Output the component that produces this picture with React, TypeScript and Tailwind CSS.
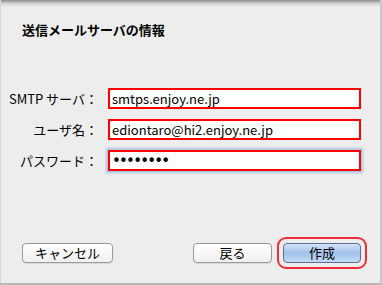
import React from "react";

const font = { fontFamily: '"Lucida Grande", "Noto Sans CJK JP", "Noto Sans", sans-serif' };

const fields = [
  { label: "SMTP サーバ：", value: "smtps.enjoy.ne.jp" },
  { label: "ユーザ名：", value: "ediontaro@hi2.enjoy.ne.jp" },
  { label: "パスワード：", value: "••••••••", focus: true },
];

const MacButton = ({ children, className = "" }: { children: React.ReactNode; className?: string }) => (
  <div
    className={
      "h-[20px] rounded-[4px] border border-[#9a9a9a] bg-gradient-to-b from-white to-[#f0f0f0] flex items-center justify-center text-[13px] text-black shadow-[0_1px_0_rgba(0,0,0,0.08)] " +
      className
    }
  >
    {children}
  </div>
);

export default function App() {
  return (
    <div
      className="relative w-[382px] h-[285px] bg-[#ededed] overflow-hidden border-r-2 border-r-[#c8c8c8] border-b-2 border-b-[#b8b8b8]"
      style={font}
    >
      {/* top shadow */}
      <div className="absolute inset-x-0 top-0 h-[7px] bg-gradient-to-b from-[#8c8c8c] via-[#d2d2d2] to-[#ededed]" />
      <div className="absolute left-0 top-0 bottom-0 w-[1px] bg-[#d8d8d8]" />

      <div className="flex flex-col pt-[20px]">
        <h1 className="pl-[22px] text-[13px] font-bold text-black leading-[20px]">送信メールサーバの情報</h1>

        <div className="mt-[48px] flex flex-col gap-[10px]">
          {fields.map((f) => (
            <div key={f.label} className="flex items-center">
              <div className="w-[99px] text-right text-[13px] text-black leading-[16px] pr-[1px]">{f.label}</div>
              <div
                className={
                  "ml-[9px] w-[253px] h-[21px] bg-white border-2 border-[#ff0000] flex items-center pl-[2px] text-[13px] text-black leading-[16px] " +
                  (f.focus ? "shadow-[0_0_2px_2px_rgba(120,160,220,0.55)]" : "")
                }
              >
                {f.focus ? (
                  <span className="text-[15px] tracking-[-1.8px] font-['DejaVu_Sans'] leading-[16px]">{f.value}</span>
                ) : (
                  f.value
                )}
              </div>
            </div>
          ))}
        </div>

        <div className="mt-[66px] flex items-center pl-[22px]">
          <MacButton className="w-[91px]">キャンセル</MacButton>
          <MacButton className="ml-[80px] w-[79px]">戻る</MacButton>
          <div className="ml-[5px] p-[4px] rounded-[9px] border-2 border-[#ef2f37]">
            <div className="w-[78px] h-[20px] rounded-[4px] border border-[#5a6f96] bg-gradient-to-b from-[#d6e4f7] via-[#9fc0ec] to-[#c6dbf6] flex items-center justify-center text-[13px] text-black">
              作成
            </div>
          </div>
        </div>
      </div>
    </div>
  );
}
